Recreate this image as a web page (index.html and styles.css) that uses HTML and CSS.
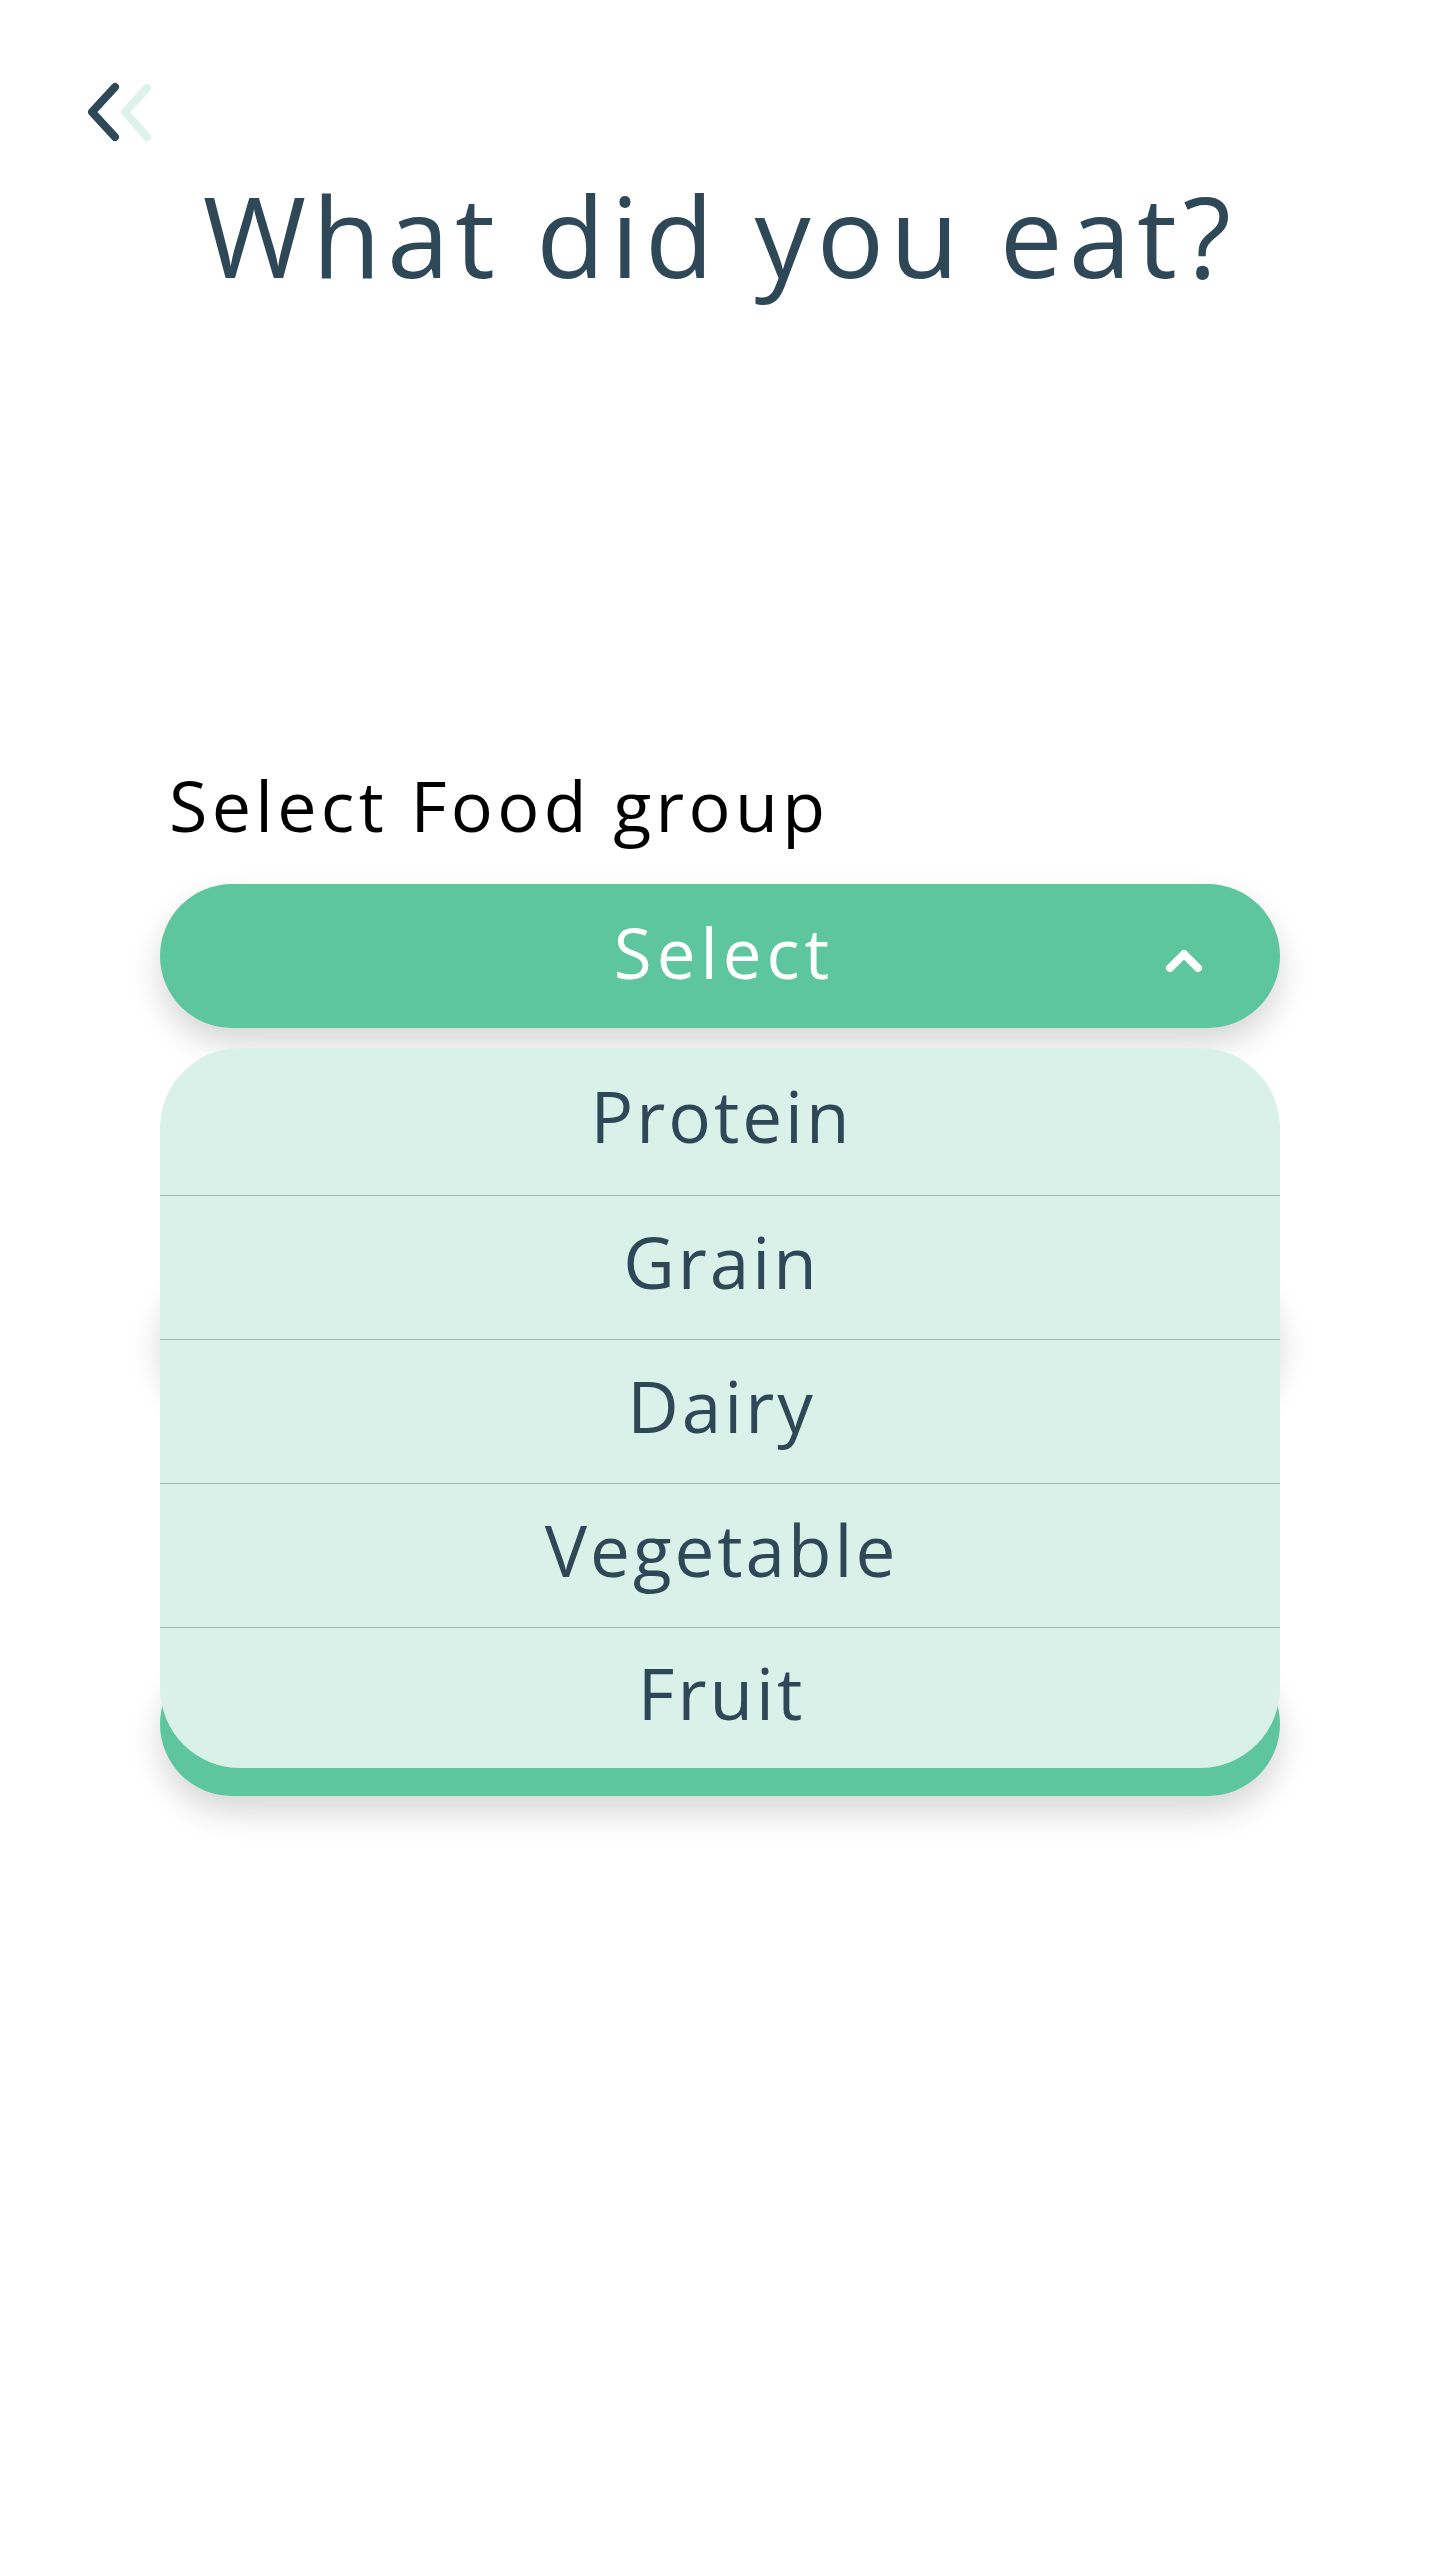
FILE: index.html
```html
<!DOCTYPE html>
<html lang="en">
<head>
<meta charset="utf-8">
<title>What did you eat?</title>
<link rel="stylesheet" href="styles.css">
</head>
<body>
<main class="screen">
  <a class="back" href="#" aria-label="Back">
    <svg width="80" height="64" viewBox="0 0 80 64">
      <path d="M67 8 L45 32 L67 57" fill="none" stroke="#dcf2ea" stroke-width="8" stroke-linecap="round" stroke-linejoin="round"/>
      <path d="M35 7 L12 32 L35 57" fill="none" stroke="#2f4858" stroke-width="8" stroke-linecap="round" stroke-linejoin="round"/>
    </svg>
  </a>
  <h1 class="title">What did you eat?</h1>

  <section class="form">
    <div class="label">Select Food group</div>
    <div class="select">
      <span class="select-text">Select</span>
      <svg class="chev" width="44" height="30" viewBox="0 0 44 30">
        <path d="M8 22 L22 8 L36 22" fill="none" stroke="#ffffff" stroke-width="8" stroke-linecap="round" stroke-linejoin="round"/>
      </svg>
    </div>

    <div class="pill pill-hidden"></div>
    <div class="pill pill-submit"></div>

    <ul class="menu">
      <li class="option option-first">Protein</li>
      <li class="option">Grain</li>
      <li class="option">Dairy</li>
      <li class="option">Vegetable</li>
      <li class="option option-last">Fruit</li>
    </ul>
  </section>
</main>
</body>
</html>
```

FILE: styles.css
```css
* { box-sizing: border-box; }

html, body {
  margin: 0;
  padding: 0;
  background: #ffffff;
}

body {
  font-family: "Open Sans", "Noto Sans", "Liberation Sans", sans-serif;
  color: #2f4858;
}

.screen {
  width: 1440px;
  min-height: 2560px;
  padding-top: 80px;
}

.back {
  display: block;
  width: 80px;
  height: 64px;
  margin-left: 80px;
}

.back svg { display: block; }

.title {
  margin: 21px 0 0;
  font-size: 112px;
  line-height: 140px;
  font-weight: 400;
  text-align: center;
  letter-spacing: 6px;
  color: #2f4858;
}

.form {
  position: relative;
  width: 1120px;
  margin: 455px auto 0;
}

.label {
  padding-left: 9px;
  font-size: 70px;
  line-height: 90px;
  color: #000000;
  letter-spacing: 4.3px;
}

.select {
  position: relative;
  margin-top: 34px;
  height: 144px;
  border-radius: 72px;
  background: #5dc69e;
  box-shadow: 0 16px 32px rgba(0, 0, 0, 0.16);
  display: flex;
  align-items: center;
  justify-content: center;
  padding-bottom: 8px;
  padding-left: 8px;
}

.select-text {
  font-size: 69px;
  line-height: 1;
  color: #ffffff;
  letter-spacing: 5px;
}

.chev {
  position: absolute;
  right: 74px;
  top: 62px;
}

.pill {
  height: 144px;
  border-radius: 72px;
  background: #5dc69e;
  box-shadow: 0 16px 32px rgba(0, 0, 0, 0.16);
}

.pill-hidden { margin-top: 232px; }
.pill-submit { margin-top: 248px; }

.menu {
  position: absolute;
  top: 288px;
  left: 0;
  width: 1120px;
  margin: 0;
  padding: 0;
  list-style: none;
  background: #daf1e9;
  border-radius: 80px;
  overflow: hidden;
}

.option {
  height: 144px;
  display: flex;
  align-items: center;
  justify-content: center;
  padding-bottom: 12px;
  padding-left: 3px;
  font-size: 71px;
  line-height: 1;
  letter-spacing: 3px;
  color: #2f4858;
  border-bottom: 1px solid #9ab5b0;
}

.option-first { height: 148px; }
.option-last { height: 140px; border-bottom: none; }
```
